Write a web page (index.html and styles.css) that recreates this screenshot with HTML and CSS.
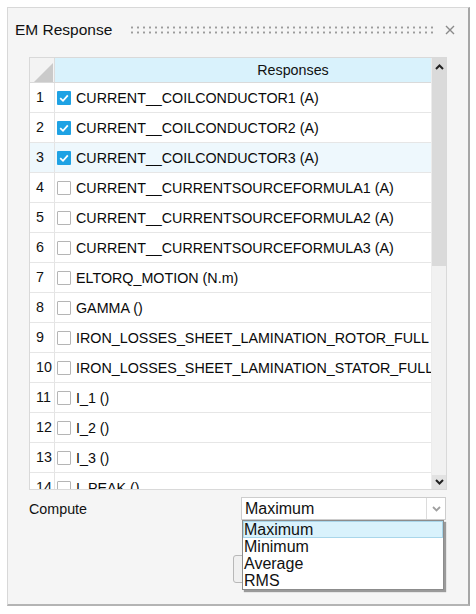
FILE: index.html
```html
<!DOCTYPE html>
<html>
<head>
<meta charset="utf-8">
<link rel="stylesheet" href="styles.css">
</head>
<body>
<div class="panel">
  <div class="titlebar">
    <span class="title">EM Response</span>
    <span class="grip"></span>
    <svg class="close" width="10" height="10" viewBox="0 0 10 10"><path d="M1 1 L9 9 M9 1 L1 9" stroke="#8a8a8a" stroke-width="1.4" fill="none"/></svg>
  </div>
  <div class="table">
    <div class="viewport">
      <div class="hrow">
        <div class="corner"><svg width="24" height="24" viewBox="0 0 24 24"><polygon points="4,24 23,5 23,24" fill="#cacaca"/></svg></div>
        <div class="hcell">Responses</div>
      </div>
      <div class="row"><div class="num">1</div><div class="cell"><span class="cb on"><svg width="14" height="14" viewBox="0 0 14 14"><polyline points="3.2,7.2 6,9.8 10.8,4.4" stroke="#fff" stroke-width="1.8" fill="none"/></svg></span>CURRENT__COILCONDUCTOR1 (A)</div></div>
      <div class="row"><div class="num">2</div><div class="cell"><span class="cb on"><svg width="14" height="14" viewBox="0 0 14 14"><polyline points="3.2,7.2 6,9.8 10.8,4.4" stroke="#fff" stroke-width="1.8" fill="none"/></svg></span>CURRENT__COILCONDUCTOR2 (A)</div></div>
      <div class="row sel"><div class="num">3</div><div class="cell"><span class="cb on"><svg width="14" height="14" viewBox="0 0 14 14"><polyline points="3.2,7.2 6,9.8 10.8,4.4" stroke="#fff" stroke-width="1.8" fill="none"/></svg></span>CURRENT__COILCONDUCTOR3 (A)</div></div>
      <div class="row"><div class="num">4</div><div class="cell"><span class="cb"></span>CURRENT__CURRENTSOURCEFORMULA1 (A)</div></div>
      <div class="row"><div class="num">5</div><div class="cell"><span class="cb"></span>CURRENT__CURRENTSOURCEFORMULA2 (A)</div></div>
      <div class="row"><div class="num">6</div><div class="cell"><span class="cb"></span>CURRENT__CURRENTSOURCEFORMULA3 (A)</div></div>
      <div class="row"><div class="num">7</div><div class="cell"><span class="cb"></span>ELTORQ_MOTION (N.m)</div></div>
      <div class="row"><div class="num">8</div><div class="cell"><span class="cb"></span>GAMMA ()</div></div>
      <div class="row"><div class="num">9</div><div class="cell"><span class="cb"></span>IRON_LOSSES_SHEET_LAMINATION_ROTOR_FULL ()</div></div>
      <div class="row"><div class="num">10</div><div class="cell"><span class="cb"></span>IRON_LOSSES_SHEET_LAMINATION_STATOR_FULL ()</div></div>
      <div class="row"><div class="num">11</div><div class="cell"><span class="cb"></span>I_1 ()</div></div>
      <div class="row"><div class="num">12</div><div class="cell"><span class="cb"></span>I_2 ()</div></div>
      <div class="row"><div class="num">13</div><div class="cell"><span class="cb"></span>I_3 ()</div></div>
      <div class="row"><div class="num">14</div><div class="cell"><span class="cb"></span>I_PEAK ()</div></div>
    </div>
    <div class="scrollbar">
      <div class="sbtn up"><svg width="9" height="6" viewBox="0 0 9 6"><path d="M1 5 L4.5 1.5 L8 5" stroke="#222" stroke-width="2" fill="none"/></svg></div>
      <div class="thumb"></div>
      <div class="track"></div>
      <div class="sbtn down"><svg width="9" height="6" viewBox="0 0 9 6"><path d="M1 1 L4.5 4.5 L8 1" stroke="#222" stroke-width="2" fill="none"/></svg></div>
    </div>
  </div>
  <div class="form">
    <span class="label">Compute</span>
    <div class="select">
      <span class="value">Maximum</span>
      <span class="arrow"><svg width="9" height="6" viewBox="0 0 9 6"><path d="M1 1 L4.5 4.5 L8 1" stroke="#a0a0a0" stroke-width="1.8" fill="none"/></svg></span>
      <div class="list">
        <div class="item hi">Maximum</div>
        <div class="item">Minimum</div>
        <div class="item">Average</div>
        <div class="item">RMS</div>
      </div>
    </div>
  </div>
  <div class="buttons">
    <div class="btn"></div>
  </div>
</div>
</body>
</html>
```

FILE: styles.css
```css
* { box-sizing: border-box; }
body {
  margin: 0;
  background: #ffffff;
  font-family: "Liberation Sans", Arial, sans-serif;
  color: #111;
}
.panel {
  margin: 7px 0 0 7px;
  width: 463px;
  height: 599px;
  background: #f5f5f5;
  border-left: 1px solid #d8d8d8;
  border-top: 1px solid #d8d8d8;
  border-right: 2px solid #a6a6a6;
  border-bottom: 2px solid #b4b4b4;
  display: flex;
  flex-direction: column;
}
.titlebar {
  height: 44px;
  display: flex;
  align-items: center;
  padding-left: 7px;
}
.title {
  font-size: 15.5px;
  color: #111;
}
.grip {
  flex: 1;
  height: 10px;
  margin-left: 17px;
  margin-right: 12px;
  background-image: radial-gradient(circle, #9c9c9c 0.9px, transparent 1.3px);
  background-size: 6px 5px;
}
.close {
  margin-right: 13px;
  flex: none;
}
.table {
  margin: 5px 0 0 21px;
  width: 418px;
  height: 433px;
  border: 1px solid #d9d9d9;
  display: flex;
  background: #fff;
  flex: none;
}
.viewport {
  width: 401px;
  overflow: hidden;
}
.hrow, .row {
  display: flex;
  width: 501px;
}
.hrow {
  height: 25px;
  border-bottom: 1px solid #dadada;
}
.corner {
  width: 25px;
  flex: none;
  background: #f3f3f3;
  border-right: 1px solid #dcdcdc;
}
.corner svg { display: block; }
.hcell {
  width: 476px;
  background: #d9f2fc;
  text-align: center;
  font-size: 14.3px;
  line-height: 24px;
  color: #111;
}
.row {
  height: 30px;
  border-bottom: 1px solid #e6e6e6;
  background: #fff;
}
.row.sel { background: #eef8fd; }
.num {
  width: 25px;
  flex: none;
  border-right: 1px solid #e4e4e4;
  font-size: 14.3px;
  line-height: 29px;
  padding-left: 6px;
}
.cell {
  flex: 1;
  display: flex;
  align-items: center;
  white-space: nowrap;
  font-size: 14.3px;
  padding-left: 2px;
  color: #0a0a0a;
}
.cb {
  width: 14px;
  height: 14px;
  flex: none;
  margin-right: 5px;
  border: 1px solid #b5b5b5;
  background: #fff;
  border-radius: 1px;
}
.cb.on {
  border: none;
  background: #1ea2e4;
}
.cb svg { display: block; }
.scrollbar {
  width: 15px;
  display: flex;
  flex-direction: column;
  background: #f1f1f1;
  border-left: 1px solid #ececec;
}
.sbtn {
  height: 16px;
  display: flex;
  align-items: center;
  justify-content: center;
  background: #dadada;
}
.sbtn.up { align-items: flex-end; padding-bottom: 5px; height: 17px; }
.sbtn.down { height: 14px; background: #e2e2e2; }
.thumb {
  height: 191px;
  background: #dadada;
}
.track { flex: 1; }
.form {
  margin-top: 7px;
  padding: 0 22px 0 21px;
  display: flex;
  align-items: center;
  justify-content: space-between;
}
.label {
  font-size: 14.3px;
  color: #111;
}
.select {
  position: relative;
  width: 205px;
  height: 23px;
  background: #fff;
  border: 1px solid #cdcdcd;
  display: flex;
  align-items: center;
}
.value {
  flex: 1;
  font-size: 16px;
  padding-left: 3px;
  color: #111;
}
.arrow {
  width: 19px;
  height: 21px;
  border-left: 1px solid #dcdcdc;
  display: flex;
  align-items: center;
  justify-content: center;
}
.list {
  position: absolute;
  top: 22px;
  left: 0;
  width: 202px;
  height: 70px;
  background: #fff;
  border: 1px solid #8c8c8c;
  box-shadow: 2px 2px 1px #9a9a9a;
  z-index: 2;
}
.item {
  height: 17px;
  font-size: 16px;
  line-height: 17px;
  padding-left: 1px;
  color: #111;
}
.item.hi {
  background: #d9f2fc;
  outline: 1px solid #a9d6ea;
  outline-offset: -1px;
}
.buttons {
  margin-top: 35px;
  padding-left: 225px;
}
.btn {
  width: 80px;
  height: 28px;
  border: 1px solid #b8b8b8;
  border-radius: 3px;
  background: #f0f0f0;
}
```
